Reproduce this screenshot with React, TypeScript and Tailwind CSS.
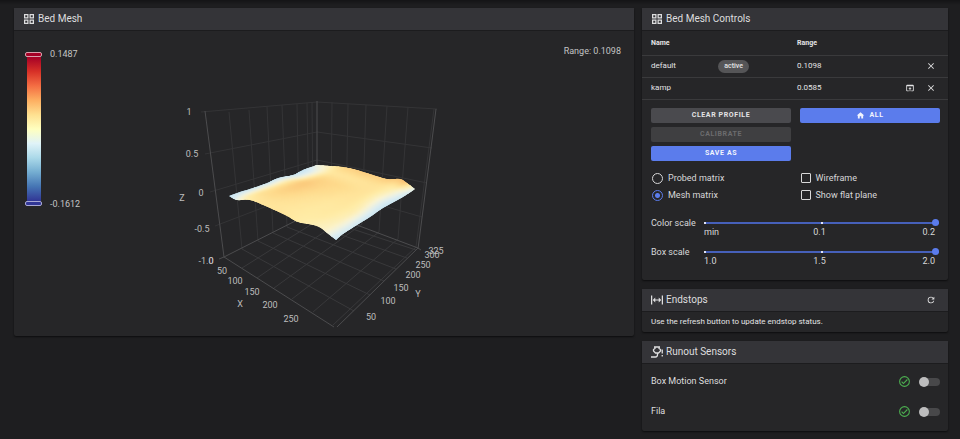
import React, { useState } from "react";

type Pt = [number, number];

/* ---------- surface outline (four edges of the mesh) ---------- */
const leftToFront: Pt[] = [[229, 196], [237, 200], [250, 200], [270, 208], [287, 216], [298, 222], [317, 226], [327, 233], [336, 240]];
const backToRight: Pt[] = [[317, 165], [330, 166], [343, 167], [357, 170], [373, 175], [387, 179], [400, 179], [407, 183], [415, 189]];
const leftToBack: Pt[] = [[229, 196], [240, 192], [250, 189], [267, 183], [278, 178], [293, 175], [303, 170], [317, 165]];
const frontToRight: Pt[] = [[336, 240], [343, 234], [357, 225], [370, 217], [383, 208], [403, 197], [415, 189]];

/* heights, rows run from the left/front edge to the back/right edge */
const HEIGHTS: number[][] = [
  [0.0, 0.3, 0.62, 0.64, 0.58, 0.5, 0.4, 0.05],
  [0.0, 0.56, 0.68, 0.62, 0.57, 0.54, 0.44, 0.12],
  [0.0, 0.66, 0.76, 0.64, 0.58, 0.58, 0.48, 0.12],
  [0.0, 0.66, 0.86, 0.68, 0.6, 0.6, 0.5, 0.08],
  [0.0, 0.58, 0.9, 0.74, 0.64, 0.62, 0.46, 0.06],
  [0.0, 0.46, 0.8, 0.76, 0.68, 0.62, 0.42, 0.04],
  [0.0, 0.3, 0.6, 0.62, 0.64, 0.64, 0.52, 0.1],
  [0.3, 0.5, 0.8, 0.88, 0.84, 0.9, 1.0, 0.2],
];

const STOPS: [number, number[]][] = [
  [0, [192, 225, 241]],
  [0.22, [222, 238, 242]],
  [0.38, [250, 244, 212]],
  [0.56, [255, 236, 166]],
  [0.75, [254, 218, 140]],
  [1, [248, 186, 110]],
];

function along(line: Pt[], t: number): Pt {
  const n = line.length - 1;
  const i = Math.min(n - 1, Math.floor(t * n));
  const f = t * n - i;
  const p0 = line[Math.max(0, i - 1)];
  const p1 = line[i];
  const p2 = line[i + 1];
  const p3 = line[Math.min(n, i + 2)];
  const c = (k: 0 | 1) =>
    0.5 * (2 * p1[k] + (p2[k] - p0[k]) * f + (2 * p0[k] - 5 * p1[k] + 4 * p2[k] - p3[k]) * f * f + (3 * p1[k] - p0[k] - 3 * p2[k] + p3[k]) * f * f * f);
  return [c(0), c(1)];
}

function surfacePoint(u: number, v: number): Pt {
  const a = along(leftToFront, u);
  const b = along(backToRight, u);
  const c = along(leftToBack, v);
  const d = along(frontToRight, v);
  const [p00, p10] = [leftToFront[0], leftToFront[8]];
  const [p01, p11] = [backToRight[0], backToRight[8]];
  const mix = (k: 0 | 1) =>
    (1 - v) * a[k] + v * b[k] + (1 - u) * c[k] + u * d[k] -
    ((1 - u) * (1 - v) * p00[k] + u * (1 - v) * p10[k] + (1 - u) * v * p01[k] + u * v * p11[k]);
  return [mix(0), mix(1)];
}

function heightAt(u: number, v: number) {
  const x = Math.min(6, Math.floor(u * 7));
  const y = Math.min(6, Math.floor(v * 7));
  const fx = u * 7 - x;
  const fy = v * 7 - y;
  const top = HEIGHTS[y][x] * (1 - fx) + HEIGHTS[y][x + 1] * fx;
  const low = HEIGHTS[y + 1][x] * (1 - fx) + HEIGHTS[y + 1][x + 1] * fx;
  return top * (1 - fy) + low * fy;
}

function colorOf(h: number) {
  let i = 0;
  while (i < STOPS.length - 2 && h > STOPS[i + 1][0]) i++;
  const [t0, c0] = STOPS[i];
  const [t1, c1] = STOPS[i + 1];
  const f = (h - t0) / (t1 - t0);
  return `rgb(${c0.map((c, k) => Math.round(c + (c1[k] - c) * f)).join(",")})`;
}

const CELLS = 28;
const surface = Array.from({ length: CELLS * CELLS }, (_, n) => {
  const i = n % CELLS;
  const j = Math.floor(n / CELLS);
  const corners: Pt[] = [[i, j], [i + 1, j], [i + 1, j + 1], [i, j + 1]];
  return {
    points: corners.map(([a, b]) => surfacePoint(a / CELLS, b / CELLS).map((c) => c.toFixed(2)).join(",")).join(" "),
    color: colorOf(heightAt((i + 0.5) / CELLS, (j + 0.5) / CELLS)),
  };
});

const STEPS = Array.from({ length: 41 }, (_, i) => i / 40);
const outline = [
  ...STEPS.map((t) => along(leftToFront, t)),
  ...STEPS.map((t) => along(frontToRight, t)),
  ...STEPS.map((t) => along(backToRight, 1 - t)),
  ...STEPS.map((t) => along(leftToBack, 1 - t)),
].map((p) => p.map((c) => c.toFixed(2)).join(",")).join(" ");

const WALL_LINES = [
  /* left wall */
  "M229 112L242 249", "M249 110L258 241", "M267 107L273 233", "M282 105L287 227", "M297 104L299 220", "M307 103L309 215", "M312 102L313 213",
  /* right wall */
  "M332 102L331 212", "M348 104L346 217", "M366 105L362 224", "M387 106L379 232", "M408 107L398 239", "M434 109L416 247",
  /* levels */
  "M201 112L317 102L437 109", "M205 154L317 132L432 148", "M210 192L317 160L427 183", "M215 226L317 187L422 217",
];
const FLOOR_LINES = [
  "M242 249L354 311", "M258 241L370 295", "M273 233L384 281", "M287 227L396 269", "M299 220L407 258", "M310 215L416 250",
  "M242 268L331 212", "M257 278L346 217", "M274 288L362 224", "M292 299L379 232", "M313 312L398 239", "M333 325L416 247",
];
const AXIS_LINES = ["M205 111L224 257", "M317 101L317 166", "M436 109L418 249", "M219 259L224 257L317 210L418 248L421 250", "M224 257L334 327", "M337 327L418 248"];

const AXIS_TEXT: [number, number, string][] = [
  [189, 115, "1"], [192, 157, "0.5"], [201, 196, "0"], [202, 232, "-0.5"], [206, 264, "-1.0"], [211, 264, "0"],
  [222, 274, "50"], [235, 284, "100"], [252, 295, "150"], [270, 308, "200"], [291, 322, "250"],
  [371, 320, "50"], [388, 304, "100"], [401, 291, "150"], [413, 278, "200"], [423, 268, "250"], [432, 258, "300"], [436, 254, "325"],
  [182, 201, "Z"], [240, 307, "X"], [418, 297, "Y"],
];

function MeshChart() {
  const cells = surface.map((c) => <polygon key={c.points} points={c.points} fill={c.color} stroke={c.color} strokeWidth="1" />);
  return (
    <svg viewBox="174 90 300 241" className="mt-[59px] h-[241px] w-[300px]" role="img" aria-label="Bed mesh surface">
      <defs>
        <clipPath id="mesh-outline"><polygon points={outline} /></clipPath>
        <filter id="mesh-shading"><feGaussianBlur stdDeviation="1.600" /></filter>
      </defs>
      <g fill="none">
        {WALL_LINES.map((d) => <path key={d} d={d} stroke="#343436" />)}
        {FLOOR_LINES.map((d) => <path key={d} d={d} stroke="#39393b" />)}
        {AXIS_LINES.map((d) => <path key={d} d={d} stroke="#4c4c4e" />)}
      </g>
      <g clipPath="url(#mesh-outline)">
        <g>{cells}</g>
        <g filter="url(#mesh-shading)">{cells}</g>
      </g>
      <g className="text-[9px]" fill="#bdbdbd" textAnchor="middle">
        {AXIS_TEXT.map(([x, y, t]) => <text key={`${x}-${y}`} x={x} y={y}>{t}</text>)}
      </g>
    </svg>
  );
}

/* ---------- icons ---------- */
function Icon({ d, className }: { d: string; className: string }) {
  return <svg viewBox="0 0 24 24" fill="currentColor" className={className} aria-hidden="true"><path d={d} /></svg>;
}
const GRID = "M2 11h9V2H2v9zm2.500-6.500h4v4h-4zM13 2v9h9V2zm6.500 6.500h-4v-4h4zM2 22h9v-9H2zm2.500-6.500h4v4h-4zM13 22h9v-9h-9zm2.500-6.500h4v4h-4z";
const CLOSE = "M19 6.41L17.59 5 12 10.59 6.41 5 5 6.41 10.59 12 5 17.59 6.41 19 12 13.41 17.59 19 19 17.59 13.41 12z";
const OPEN_APP = "M12 10L8 14H11V20H13V14H16M19 4H5C3.9 4 3 4.9 3 6V18C3 19.1 3.9 20 5 20H9V18H5V8H19V18H15V20H19C20.1 20 21 19.1 21 18V6C21 4.9 20.1 4 19 4Z";
const HOME = "M10 20v-6h4v6h5v-8h3L12 3 2 12h3v8z";
const REFRESH = "M17.65 6.35A7.96 7.96 0 0 0 12 4a8 8 0 1 0 7.73 10h-2.08A6 6 0 1 1 12 6c1.66 0 3.14.69 4.22 1.78L13 11h7V4l-2.35 2.35z";
const EXPAND = "M0 3h2.500v18H0zM21.500 3H24v18h-2.500zM8.500 7L3.500 12l5 5v-4h7v4l5-5-5-5v4h-7z";
const CHECK = "M12 2a10 10 0 1 0 0 20 10 10 0 0 0 0-20m0 18a8 8 0 1 1 0-16 8 8 0 0 1 0 16m4.590-12.420L10 14.170l-2.590-2.580L6 13l4 4 8-8z";

function RunoutIcon() {
  return (
    <svg viewBox="0 0 24 24" className="size-3" fill="none" stroke="currentColor" strokeWidth="2.600" aria-hidden="true">
      <path d="M6 2h12M8 2v3L5 7v3l4 4h6l4-4V7l-3-2V2M13 14v3c0 4-1 5-4 5H0M22.500 7v8M22.500 18v3" />
    </svg>
  );
}

function Card({ icon, title, action, children }: { icon: React.ReactNode; title: string; action?: React.ReactNode; children: React.ReactNode }) {
  return (
    <section className="rounded-xs bg-[#262628] shadow-[0_1px_2px_rgba(0,0,0,0.6)]">
      <header className="flex h-[23px] items-center justify-between border-b border-[#1c1c1e] bg-[#343438] px-[9px] text-[#dededf]">
        <h2 className="flex items-center gap-[3px] text-[10px] leading-4">{icon}{title}</h2>
        {action}
      </header>
      {children}
    </section>
  );
}

function BedMesh() {
  return (
    <Card icon={<Icon d={GRID} className="size-3" />} title="Bed Mesh">
      <div className="grid h-[305px] grid-cols-[1fr_auto_1fr]">
        <div className="flex gap-2 pt-[21px] pl-[11px] text-[9px] leading-[10px] text-[#c4c4c4]">
          <div className="flex w-[17px] flex-col items-center">
            <span className="h-[5px] w-full rounded-[2px] border border-[#d9a0ac] bg-[#a50026]" />
            <span className="h-[144px] w-[14px] bg-[linear-gradient(to_bottom,#a50026,#d73027_10%,#f46d43_20%,#fdae61_30%,#fee090_40%,#ffffbf_50%,#e0f3f8_60%,#abd9e9_70%,#74add1_80%,#4575b4_90%,#313695)]" />
            <span className="h-[5px] w-full rounded-[2px] border border-[#a8a8d4] bg-[#313695]" />
          </div>
          <div className="-mt-[3px] flex h-[160px] flex-col justify-between">
            <span>0.1487</span>
            <span>-0.1612</span>
          </div>
        </div>
        <MeshChart />
        <p className="pt-[14px] pr-[13px] text-right text-[9px] leading-3 text-[#c4c4c4]">Range: 0.1098</p>
      </div>
    </Card>
  );
}

const PROFILES = [
  { name: "default", range: "0.1098", active: true },
  { name: "kamp", range: "0.0585", active: false },
];

function Profiles() {
  return (
    <table className="w-full table-fixed border-collapse text-left text-[8px] leading-3 text-[#e4e4e5]">
      <thead>
        <tr className="h-6 border-b border-[#3a3a3c] text-[7px]">
          <th className="w-[22%] pl-[9px] font-bold">Name</th>
          <th className="w-[28%]" aria-label="Status" />
          <th className="w-[25%] pl-[2px] font-bold">Range</th>
          <th className="w-[25%]" aria-label="Actions" />
        </tr>
      </thead>
      <tbody>
        {PROFILES.map((p) => (
          <tr key={p.name} className="h-[22px] border-b border-[#3a3a3c]">
            <td className="pl-[9px]">{p.name}</td>
            <td className="pl-[9px]">
              {p.active && <span className="inline-block rounded-full bg-[#555557] px-[6px] text-[7px] leading-[13px] font-medium">active</span>}
            </td>
            <td className="pl-[2px]">{p.range}</td>
            <td className="pr-3">
              <div className="flex items-center justify-end gap-[11px]">
                {!p.active && <button type="button" aria-label={`Load ${p.name}`}><Icon d={OPEN_APP} className="size-[10px]" /></button>}
                <button type="button" aria-label={`Remove ${p.name}`}><Icon d={CLOSE} className="size-[10px]" /></button>
              </div>
            </td>
          </tr>
        ))}
      </tbody>
    </table>
  );
}

function ActionButton({ tone, disabled, children }: { tone: string; disabled?: boolean; children: React.ReactNode }) {
  return (
    <button type="button" disabled={disabled} className={`flex h-[15px] w-full items-center justify-center gap-1 rounded-xs text-[7px] font-bold tracking-[0.6px] uppercase ${tone}`}>
      {children}
    </button>
  );
}

function Choice({ type, label, checked, onChange }: { type: "radio" | "checkbox"; label: string; checked: boolean; onChange: () => void }) {
  const look = type === "radio"
    ? "size-[11px] rounded-full checked:border-[#5b7cec] checked:bg-[radial-gradient(circle,#5b7cec_0_2px,transparent_3px)]"
    : "size-[10px] rounded-[1px] checked:bg-[#5b7cec]";
  return (
    <label className="flex h-[17px] items-center gap-[5px] text-[9px] leading-[17px]">
      <input type={type} name={type === "radio" ? "matrix" : label} checked={checked} onChange={onChange} className={`appearance-none border border-[#d8d8d9] ${look}`} />
      {label}
    </label>
  );
}

function Scale({ id, label, ticks }: { id: string; label: string; ticks: string[] }) {
  const [value, setValue] = useState(100);
  return (
    <div className="flex h-[29px] text-[9px]">
      <label htmlFor={id} className="w-[53px] leading-3">{label}</label>
      <div className="flex-1 pr-px">
        <div className="relative h-3">
          <input
            id={id} type="range" min={0} max={100} value={value} onChange={(e) => setValue(Number(e.target.value))}
            className="block h-3 w-full appearance-none bg-[linear-gradient(#4660ba,#4660ba)] bg-[length:100%_2px] bg-center bg-no-repeat [&::-webkit-slider-thumb]:size-[7px] [&::-webkit-slider-thumb]:appearance-none [&::-webkit-slider-thumb]:rounded-full [&::-webkit-slider-thumb]:bg-[#5b7cec]"
          />
          <div className="pointer-events-none absolute inset-0 flex items-center justify-between">
            <span className="size-[2px] bg-[#dfe4f8]" />
            <span className="size-[2px] bg-[#dfe4f8]" />
            <span className="size-[2px]" />
          </div>
        </div>
        <div className="grid grid-cols-3 pr-1 leading-[7px]">
          <span>{ticks[0]}</span>
          <span className="text-center">{ticks[1]}</span>
          <span className="text-right">{ticks[2]}</span>
        </div>
      </div>
    </div>
  );
}

function Controls() {
  const [matrix, setMatrix] = useState("mesh");
  const [wireframe, setWireframe] = useState(false);
  const [flat, setFlat] = useState(false);
  return (
    <Card icon={<Icon d={GRID} className="size-3" />} title="Bed Mesh Controls">
      <Profiles />
      <div className="pt-2 pr-2 pb-[5px] pl-[9px] text-[#d8d8d9]">
        <div className="grid grid-cols-2 gap-[9px]">
          <div className="grid gap-1">
            <ActionButton tone="bg-[#4a4a4e] text-[#e4e4e5]">Clear profile</ActionButton>
            <ActionButton tone="bg-[#3f3f41] text-[#6c6c6e]" disabled>Calibrate</ActionButton>
            <ActionButton tone="bg-[#5b7cec] text-[#f2f4fd]">Save as</ActionButton>
          </div>
          <div>
            <ActionButton tone="bg-[#5b7cec] text-[#f2f4fd]"><Icon d={HOME} className="size-[9px]" />All</ActionButton>
          </div>
        </div>
        <div className="mt-[9px] grid grid-cols-2 gap-x-[9px] pl-px">
          <Choice type="radio" label="Probed matrix" checked={matrix === "probed"} onChange={() => setMatrix("probed")} />
          <Choice type="checkbox" label="Wireframe" checked={wireframe} onChange={() => setWireframe(!wireframe)} />
          <Choice type="radio" label="Mesh matrix" checked={matrix === "mesh"} onChange={() => setMatrix("mesh")} />
          <Choice type="checkbox" label="Show flat plane" checked={flat} onChange={() => setFlat(!flat)} />
        </div>
        <div className="mt-[13px]">
          <Scale id="color-scale" label="Color scale" ticks={["min", "0.1", "0.2"]} />
          <Scale id="box-scale" label="Box scale" ticks={["1.0", "1.5", "2.0"]} />
        </div>
      </div>
    </Card>
  );
}

function Sensor({ name }: { name: string }) {
  const [on, setOn] = useState(false);
  return (
    <label className="flex h-[30px] items-center gap-2 text-[9px] text-[#dededf]">
      <span className="flex-1">{name}</span>
      <Icon d={CHECK} className="size-[13px] text-[#4caf50]" />
      <span className="relative flex h-[10px] w-[21px] items-center">
        <input type="checkbox" role="switch" checked={on} onChange={() => setOn(!on)} className="peer ml-[3px] h-2 w-[18px] appearance-none rounded-full bg-[#48484a]" />
        <span className="pointer-events-none absolute left-0 size-[10px] rounded-full bg-[#bdbdbe] peer-checked:left-[11px]" />
      </span>
    </label>
  );
}

export default function App() {
  return (
    <main className="grid min-h-screen grid-cols-[620fr_306fr] items-start gap-2 bg-[#1e1e20] bg-[linear-gradient(#141416,#1e1e20_5px)] pt-2 pr-3 pl-[14px] font-['Roboto','Liberation_Sans',sans-serif]">
      <BedMesh />
      <div className="grid gap-[9px]">
        <Controls />
        <Card
          icon={<Icon d={EXPAND} className="size-3" />}
          title="Endstops"
          action={<button type="button" aria-label="Refresh endstops" className="mr-[3px]"><Icon d={REFRESH} className="size-[10px]" /></button>}
        >
          <p className="px-[9px] py-1 text-[8px] leading-3 text-[#e4e4e5]">Use the refresh button to update endstop status.</p>
        </Card>
        <Card icon={<RunoutIcon />} title="Runout Sensors">
          <div className="pt-[3px] pr-2 pb-1 pl-[9px]">
            <Sensor name="Box Motion Sensor" />
            <Sensor name="Fila" />
          </div>
        </Card>
      </div>
    </main>
  );
}
